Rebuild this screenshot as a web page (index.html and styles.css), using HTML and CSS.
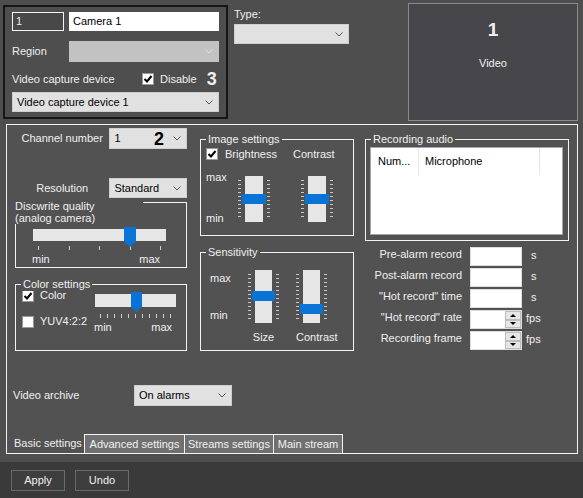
FILE: index.html
```html
<!DOCTYPE html>
<html lang="en">
<head>
    <meta charset="UTF-8">
    <title>Camera settings</title>
    <link rel="stylesheet" href="styles.css">
</head>
<body>
    <!-- top: device, type, tile -->
    <div class="top">
        <div class="device-box">
            <div class="dev-row">
                <div class="num-input">1</div>
                <div class="text-input">Camera 1</div>
            </div>
            <div class="dev-row region">
                <span class="dev-label">Region</span>
                <div class="select disabled region-select">
                    <span></span>
                    <svg class="chev" viewBox="0 0 8 5"><path d="M0.5 0.5 L4 4 L7.5 0.5" fill="none" stroke="#e0e0e0"/></svg>
                </div>
            </div>
            <div class="dev-row capture">
                <span class="capture-label">Video capture device</span>
                <svg class="cb" viewBox="0 0 12 12"><rect x="0.5" y="0.5" width="11" height="11" fill="#fff" stroke="#9a9a9a"/><path d="M2.5 6 L5 8.5 L9.5 3" fill="none" stroke="#000" stroke-width="2"/></svg>
                <span class="cb-text">Disable</span>
                <span class="callout">3</span>
            </div>
            <div class="select device-select">
                <span>Video capture device 1</span>
                <svg class="chev" viewBox="0 0 8 5"><path d="M0.5 0.5 L4 4 L7.5 0.5" fill="none" stroke="#555"/></svg>
            </div>
        </div>

        <div class="type-block">
            <div class="type-label">Type:</div>
            <div class="select type-select">
                <span></span>
                <svg class="chev" viewBox="0 0 8 5"><path d="M0.5 0.5 L4 4 L7.5 0.5" fill="none" stroke="#555"/></svg>
            </div>
        </div>

        <div class="tile">
            <div class="tile-num">1</div>
            <div class="tile-name">Video</div>
        </div>
    </div>

    <!-- main panel -->
    <div class="panel">
        <div class="panel-body">
            <div class="cols">
                <!-- left column -->
                <div class="col-left">
                    <div class="form-row">
                        <span class="center-label">Channel number</span>
                        <div class="select small-select">
                            <span>1</span>
                            <span class="callout dark">2</span>
                            <svg class="chev" viewBox="0 0 8 5"><path d="M0.5 0.5 L4 4 L7.5 0.5" fill="none" stroke="#555"/></svg>
                        </div>
                    </div>
                    <div class="form-row resolution">
                        <span class="center-label">Resolution</span>
                        <div class="select small-select">
                            <span>Standard</span>
                            <svg class="chev" viewBox="0 0 8 5"><path d="M0.5 0.5 L4 4 L7.5 0.5" fill="none" stroke="#555"/></svg>
                        </div>
                    </div>

                    <div class="group quality">
                        <div class="quality-title">Discwrite quality<br>(analog camera)</div>
                        <div class="hslider quality-slider">
                            <div class="htrack"><div class="hthumb" style="left: 91px"></div></div>
                            <div class="hticks"><i></i><i></i><i></i><i></i><i></i></div>
                            <div class="minmax"><span>min</span><span>max</span></div>
                        </div>
                    </div>

                    <div class="group color-group">
                        <div class="group-title">Color settings</div>
                        <div class="color-checks">
                            <div class="check-row">
                                <svg class="cb" viewBox="0 0 12 12"><rect x="0.5" y="0.5" width="11" height="11" fill="#fff" stroke="#9a9a9a"/><path d="M2.5 6 L5 8.5 L9.5 3" fill="none" stroke="#000" stroke-width="2"/></svg>
                                <span>Color</span>
                            </div>
                            <div class="check-row">
                                <svg class="cb" viewBox="0 0 12 12"><rect x="0.5" y="0.5" width="11" height="11" fill="#fff" stroke="#9a9a9a"/></svg>
                                <span>YUV4:2:2</span>
                            </div>
                        </div>
                        <div class="hslider color-slider">
                            <div class="htrack"><div class="hthumb" style="left: 36px"></div></div>
                            <div class="hticks"><i></i><i></i><i></i><i></i><i></i><i></i><i></i><i></i><i></i><i></i><i></i></div>
                            <div class="minmax"><span>min</span><span>max</span></div>
                        </div>
                    </div>
                </div>

                <!-- middle column -->
                <div class="col-mid">
                    <div class="group image-group">
                        <div class="group-title">Image settings</div>
                        <div class="image-head">
                            <svg class="cb" viewBox="0 0 12 12"><rect x="0.5" y="0.5" width="11" height="11" fill="#fff" stroke="#9a9a9a"/><path d="M2.5 6 L5 8.5 L9.5 3" fill="none" stroke="#000" stroke-width="2"/></svg>
                            <span class="brightness">Brightness</span>
                            <span class="contrast">Contrast</span>
                        </div>
                        <div class="image-body">
                            <div class="range-labels"><span>max</span><span>min</span></div>
                            <div class="vslider">
                                <div class="vticks"></div>
                                <div class="vtrack"><div class="vthumb" style="top: 18px"></div></div>
                                <div class="vticks"></div>
                            </div>
                            <div class="vslider second">
                                <div class="vticks"></div>
                                <div class="vtrack"><div class="vthumb" style="top: 18px"></div></div>
                                <div class="vticks"></div>
                            </div>
                        </div>
                    </div>

                    <div class="group sens-group">
                        <div class="group-title">Sensitivity</div>
                        <div class="sens-body">
                            <div class="range-labels"><span>max</span><span>min</span></div>
                            <div class="sens-item">
                                <div class="vslider">
                                    <div class="vticks"></div>
                                    <div class="vtrack"><div class="vthumb" style="top: 21px"></div></div>
                                    <div class="vticks"></div>
                                </div>
                                <div class="sens-name">Size</div>
                            </div>
                            <div class="sens-item second">
                                <div class="vslider">
                                    <div class="vticks"></div>
                                    <div class="vtrack"><div class="vthumb" style="top: 34px"></div></div>
                                    <div class="vticks"></div>
                                </div>
                                <div class="sens-name">Contrast</div>
                            </div>
                        </div>
                    </div>
                </div>

                <!-- right column -->
                <div class="col-right">
                    <div class="group audio-group">
                        <div class="group-title">Recording audio</div>
                        <div class="audio-list">
                            <div class="audio-head">
                                <span class="col-num">Num...</span>
                                <span class="col-mic">Microphone</span>
                            </div>
                        </div>
                    </div>

                    <div class="field-row first">
                        <span class="field-label">Pre-alarm record</span>
                        <div class="field-input"></div>
                        <span class="unit">s</span>
                    </div>
                    <div class="field-row">
                        <span class="field-label">Post-alarm record</span>
                        <div class="field-input"></div>
                        <span class="unit">s</span>
                    </div>
                    <div class="field-row">
                        <span class="field-label">"Hot record" time</span>
                        <div class="field-input"></div>
                        <span class="unit">s</span>
                    </div>
                    <div class="field-row">
                        <span class="field-label">"Hot record" rate</span>
                        <div class="field-input"><div class="spin"><i class="up"></i><i class="down"></i></div></div>
                        <span class="unit fps">fps</span>
                    </div>
                    <div class="field-row">
                        <span class="field-label">Recording frame</span>
                        <div class="field-input"><div class="spin"><i class="up"></i><i class="down"></i></div></div>
                        <span class="unit fps">fps</span>
                    </div>
                </div>
            </div>

            <div class="archive-row">
                <span class="archive-label">Video archive</span>
                <div class="select archive-select">
                    <span>On alarms</span>
                    <svg class="chev" viewBox="0 0 8 5"><path d="M0.5 0.5 L4 4 L7.5 0.5" fill="none" stroke="#555"/></svg>
                </div>
            </div>
        </div>

        <div class="tabs">
            <div class="tab active">Basic settings</div>
            <div class="tab adv">Advanced settings</div>
            <div class="tab streams">Streams settings</div>
            <div class="tab main">Main stream</div>
        </div>
    </div>

    <!-- bottom buttons -->
    <div class="footer">
        <div class="btn">Apply</div>
        <div class="btn">Undo</div>
    </div>
</body>
</html>
```

FILE: styles.css
```css
* {
    margin: 0;
    padding: 0;
    box-sizing: border-box;
}

body {
    width: 583px;
    height: 498px;
    overflow: hidden;
    background-color: #4e4e4e;
    color: #f0f0f0;
    font-family: "Liberation Sans", Arial, sans-serif;
    font-size: 11px;
    line-height: 13px;
    white-space: nowrap;
}

/* common controls */
.select {
    display: flex;
    align-items: center;
    justify-content: space-between;
    background-color: #e1e1e1;
    color: #000;
    border: 1px solid #cfcfcf;
    padding: 0 5px 0 4px;
}

.select.disabled {
    background-color: #c2c2c2;
    border-color: #c2c2c2;
}

.chev {
    width: 8px;
    height: 5px;
    flex-shrink: 0;
}

.cb {
    width: 12px;
    height: 12px;
    flex-shrink: 0;
}

.callout {
    font-size: 18px;
    font-weight: bold;
    line-height: 18px;
}

.callout.dark {
    color: #000;
    margin-left: auto;
    margin-right: 9px;
}

/* top area */
.top {
    display: flex;
    height: 124px;
}

.device-box {
    margin: 5px 0 0 3px;
    width: 225px;
    height: 114px;
    border: 2px solid #161616;
    padding: 5px 0 0 7px;
}

.dev-row {
    display: flex;
    align-items: center;
}

.num-input {
    width: 52px;
    height: 19px;
    border: 1px solid #f4f4f4;
    background-color: #484848;
    padding: 2px 0 0 3px;
}

.text-input {
    margin-left: 5px;
    width: 150px;
    height: 19px;
    background-color: #fff;
    color: #000;
    padding: 3px 0 0 4px;
}

.region {
    margin-top: 10px;
}

.dev-label {
    width: 57px;
}

.region-select {
    width: 150px;
    height: 21px;
}

.capture {
    margin-top: 9px;
    height: 16px;
}

.capture-label {
    width: 130px;
}

.cb-text {
    margin-left: 6px;
}

.capture .callout {
    margin-left: 10px;
}

.device-select {
    margin-top: 5px;
    width: 207px;
    height: 20px;
}

.type-block {
    margin-left: 6px;
    padding-top: 8px;
}

.type-label {
    height: 14px;
}

.type-select {
    margin-top: 2px;
    width: 115px;
    height: 20px;
}

.tile {
    margin: 3px 5px 0 auto;
    width: 170px;
    height: 118px;
    background-color: #47464b;
    border: 1px solid #8a8a8a;
    text-align: center;
}

.tile-num {
    margin-top: 16px;
    font-size: 19px;
    font-weight: bold;
    line-height: 20px;
}

.tile-name {
    margin-top: 17px;
}

/* main panel */
.panel {
    margin-left: 6px;
    width: 572px;
    height: 330px;
    border: 1px solid #f4f4f4;
    background-color: #525252;
    display: flex;
    flex-direction: column;
}

.panel-body {
    flex: 1;
}

.cols {
    display: flex;
}

/* group boxes */
.group {
    position: relative;
    border: 1px solid #f4f4f4;
}

.group-title {
    position: absolute;
    top: -7px;
    left: 5px;
    padding: 0 2px;
    background-color: #525252;
}

/* left column */
.col-left {
    margin-left: 8px;
    width: 172px;
}

.form-row {
    display: flex;
    align-items: center;
    margin-top: 3px;
    height: 21px;
}

.form-row.resolution {
    margin-top: 29px;
    height: 20px;
}

.center-label {
    width: 95px;
    text-align: center;
}

.small-select {
    width: 78px;
    height: 100%;
}

.quality {
    margin-top: 4px;
    height: 66px;
}

.quality-title {
    position: absolute;
    top: -3px;
    left: -1px;
    width: 128px;
    background-color: #525252;
    line-height: 12px;
}

.hslider {
    width: 133px;
}

.quality-slider {
    margin: 26px 0 0 17px;
}

.htrack {
    position: relative;
    height: 12px;
    background-color: #e6e6e6;
}

.hthumb {
    position: absolute;
    top: -2px;
    width: 12px;
    height: 20px;
    background-color: #0a74d6;
    clip-path: polygon(0 0, 100% 0, 100% 72%, 50% 100%, 0 72%);
}

.hticks {
    display: flex;
    justify-content: space-between;
    margin-top: 5px;
    padding: 0 5px;
}

.hticks i {
    width: 1px;
    height: 4px;
    background-color: #cfcfcf;
}

.minmax {
    display: flex;
    justify-content: space-between;
    margin-top: 3px;
    padding: 0 6px 0 0;
    margin-left: -1px;
}

.color-group {
    margin-top: 16px;
    height: 67px;
    display: flex;
}

.color-checks {
    margin-left: 6px;
    padding-top: 4px;
    width: 73px;
}

.check-row {
    display: flex;
    align-items: center;
    height: 13px;
    margin-bottom: 13px;
}

.check-row span {
    margin-left: 6px;
}

.color-slider {
    width: 81px;
    padding-top: 9px;
}

.color-slider .htrack {
    height: 13px;
}

.color-slider .hthumb {
    width: 11px;
}

.color-slider .hticks {
    margin-top: 7px;
}

.color-slider .minmax {
    margin-top: 3px;
    padding-right: 4px;
}

/* vertical sliders */
.vslider {
    display: flex;
}

.vticks {
    width: 3px;
    margin: 4px 0;
    background: repeating-linear-gradient(to bottom, #c8c8c8 0 1px, transparent 1px 4px);
}

.vtrack {
    position: relative;
    width: 18px;
    margin: 0 4px;
    background-color: #e6e6e6;
}

.vthumb {
    position: absolute;
    left: -3px;
    right: -3px;
    height: 10px;
    background-color: #0a74d6;
}

.range-labels {
    display: flex;
    flex-direction: column;
    justify-content: space-between;
}

/* middle column */
.col-mid {
    margin-left: 13px;
    width: 154px;
}

.image-group {
    margin-top: 14px;
    height: 97px;
}

.image-head {
    display: flex;
    align-items: center;
    margin: 8px 0 0 5px;
    height: 12px;
}

.brightness {
    margin-left: 7px;
}

.contrast {
    margin-left: 16px;
}

.image-body {
    display: flex;
    margin: 11px 0 0 5px;
}

.image-body .range-labels {
    width: 32px;
    height: 54px;
}

.image-body .vslider {
    margin-top: 5px;
    height: 46px;
}

.image-body .vslider.second {
    margin-left: 31px;
}

.sens-group {
    margin-top: 16px;
    height: 99px;
}

.sens-body {
    display: flex;
    margin: 17px 0 0 9px;
}

.sens-body .range-labels {
    width: 38px;
    height: 50px;
    margin-top: 2px;
}

.sens-item .vslider {
    height: 53px;
}

.sens-item .vtrack {
    width: 17px;
}

.sens-item.second {
    margin-left: 17px;
}

.sens-name {
    margin-top: 8px;
    text-align: center;
}

/* right column */
.col-right {
    margin-left: 11px;
    width: 204px;
}

.audio-group {
    margin-top: 14px;
    height: 102px;
}

.audio-list {
    margin: 7px 0 0 4px;
    width: 193px;
    height: 88px;
    background-color: #fff;
    border: 1px solid #a6a6a6;
}

.audio-head {
    display: flex;
    height: 27px;
    color: #000;
}

.audio-head span {
    display: flex;
    align-items: center;
    border-right: 1px solid #e6e6e6;
}

.col-num {
    width: 48px;
    padding-left: 7px;
}

.col-mic {
    width: 121px;
    padding-left: 6px;
}

.field-row {
    display: flex;
    align-items: center;
    margin-top: 2px;
    height: 19px;
}

.field-row.first {
    margin-top: 6px;
}

.field-label {
    width: 97px;
    text-align: right;
    padding-bottom: 4px;
}

.field-input {
    display: flex;
    margin-left: 8px;
    width: 52px;
    height: 19px;
    background-color: #fff;
    border: 1px solid #dedede;
}

.spin {
    display: flex;
    flex-direction: column;
    margin-left: auto;
    width: 16px;
}

.spin i {
    flex: 1;
    display: flex;
    align-items: center;
    justify-content: center;
    background-color: #e6e6e6;
    border: 1px solid #bdbdbd;
}

.spin i::after {
    content: "";
    border-left: 3px solid transparent;
    border-right: 3px solid transparent;
}

.spin .up::after {
    border-bottom: 3px solid #000;
}

.spin .down::after {
    border-top: 3px solid #000;
}

.unit {
    margin-left: 9px;
    padding-bottom: 2px;
}

.unit.fps {
    margin-left: 4px;
}

/* video archive */
.archive-row {
    display: flex;
    align-items: center;
    margin-top: 34px;
    padding-left: 6px;
    height: 21px;
}

.archive-label {
    width: 121px;
}

.archive-select {
    width: 98px;
    height: 21px;
}

/* tabs */
.tabs {
    display: flex;
    height: 19px;
}

.tab {
    display: flex;
    align-items: center;
    justify-content: center;
    background-color: #707070;
    border-top: 1px solid #f4f4f4;
    border-left: 1px solid #f4f4f4;
}

.tab.active {
    width: 77px;
    background: none;
    border: none;
    justify-content: flex-start;
    padding-left: 7px;
}

.tab.adv {
    width: 100px;
}

.tab.streams {
    width: 89px;
}

.tab.main {
    width: 70px;
    border-right: 1px solid #f4f4f4;
}

/* footer */
.footer {
    display: flex;
    margin-top: 8px;
    height: 36px;
    background-color: #3a3a3a;
    padding: 8px 0 0 11px;
}

.btn {
    width: 54px;
    height: 21px;
    margin-right: 10px;
    border: 1px solid #6a6a6a;
    background-color: #3e3e3e;
    display: flex;
    align-items: center;
    justify-content: center;
}
```
